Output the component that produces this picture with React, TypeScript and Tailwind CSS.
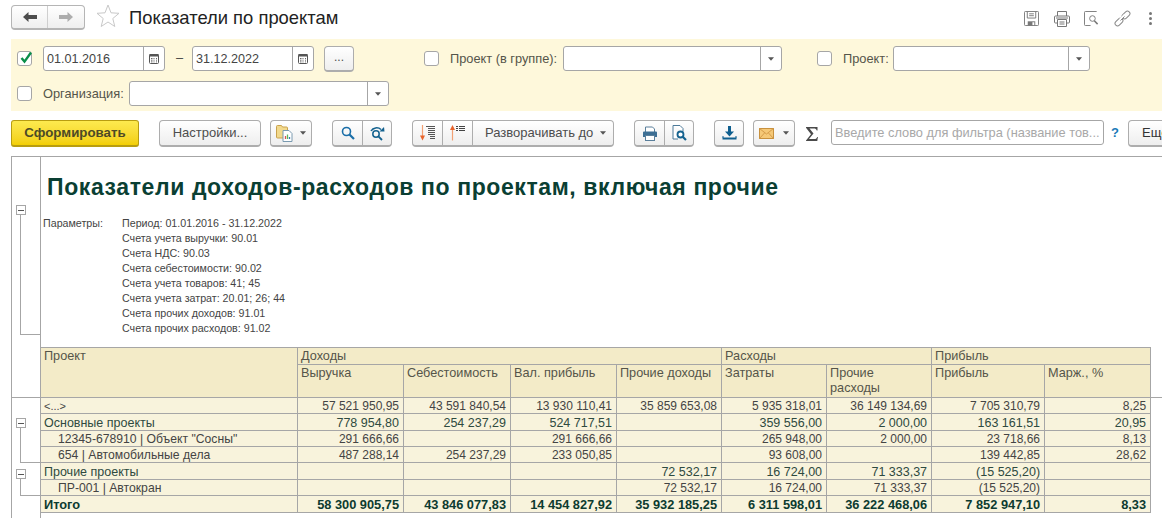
import React from "react";

const btn = "h-[27px] border border-[#adadad] border-b-[2px] rounded-[4px] bg-gradient-to-b from-white to-[#eeeeee] flex items-center justify-center shrink-0 text-[#4d4d4d]";
const Caret = ({ c = "#555" }: { c?: string }) => (
  <svg width="6" height="4" viewBox="0 0 7 4"><path d="M0 0h7L3.5 4z" fill={c} /></svg>
);

const Check = ({ checked, className }: { checked?: boolean; className?: string }) => (
  <div className={"relative w-[15px] h-[15px] shrink-0 bg-white border border-[#a6a6a6] rounded-[3px] " + (className ?? "")}>
    {checked && (
      <svg className="absolute left-[1px] -top-[2px]" width="14" height="15" viewBox="0 0 14 15">
        <path d="M2.5 8l3 3.6L12 2.5" fill="none" stroke="#0a8f4a" strokeWidth="2.4" />
      </svg>
    )}
  </div>
);

const Cal = () => (
  <svg width="10" height="11" viewBox="0 0 10 11">
    <rect x="0.5" y="1.5" width="9" height="9" rx="1" fill="none" stroke="#555" />
    <rect x="0.5" y="1" width="9" height="2.500" fill="#555" />
    <path d="M2 5.500h1.500M4.500 5.500h1M7 5.500h1M2 7.200h1.500M4.500 7.200h1M7 7.200h1M2 8.900h1.500M4.500 8.900h1M7 8.900h1" stroke="#666" strokeWidth="1" />
  </svg>
);

const DateBox = ({ v, w }: { v: string; w: string }) => (
  <div className={"h-[25px] shrink-0 bg-white border border-[#a6a6a6] rounded-[3px] flex items-center " + w}>
    <span className="flex-1 pl-[3px] text-[12.6px] pt-[1px] text-[#444]">{v}</span>
    <div className="w-[21px] h-full border-l border-[#a6a6a6] flex items-center justify-center"><Cal /></div>
  </div>
);

const Combo = ({ w, className }: { w: string; className?: string }) => (
  <div className={"h-[25px] shrink-0 bg-white border border-[#a6a6a6] rounded-[3px] flex items-center justify-end " + w + " " + (className ?? "")}>
    <div className="w-[21px] h-full border-l border-[#a6a6a6] flex items-center justify-center"><Caret /></div>
  </div>
);

const Magnifier = () => (
  <svg width="14" height="14" viewBox="0 0 14 14">
    <circle cx="5.5" cy="5.5" r="4" fill="none" stroke="#1a6ea8" strokeWidth="1.6" />
    <path d="M8.5 8.500l4.500 4.500" stroke="#1a6ea8" strokeWidth="2.200" />
  </svg>
);
const MagnifierNext = () => (
  <svg width="15" height="15" viewBox="0 0 15 15">
    <circle cx="6" cy="8" r="3.200" fill="none" stroke="#14628f" strokeWidth="1.500" />
    <path d="M8.400 10.400l3.600 3.600" stroke="#14628f" strokeWidth="1.800" />
    <path d="M1 5C3 1.500 8 .8 11 3.500" fill="none" stroke="#14628f" strokeWidth="1.500" />
    <path d="M9.500 5.500L14.500 5.500 14 1z" fill="#14628f" />
  </svg>
);
const SortDown = () => (
  <svg width="15" height="16" viewBox="0 0 15 16">
    <path d="M2.500 0v12" stroke="#f2a074" strokeWidth="1.200" />
    <path d="M0 10.500L2.500 15.500l2.500-5z" fill="#e8642c" />
    <path d="M6 1.500h9M8 3.500h7M8 5.500h7M8 7.500h7M8 9.500h7M10 11.500h5M10 13.500h5" stroke="#555" strokeWidth="1" />
  </svg>
);
const SortUp = () => (
  <svg width="15" height="16" viewBox="0 0 15 16">
    <path d="M2.500 3.500v12" stroke="#f2a074" strokeWidth="1.200" />
    <path d="M0 5L2.500 0 5 5z" fill="#e8642c" />
    <path d="M6 1.500h2M6 3.500h2M6 5.500h2M9 1.500h6M9 3.500h6M9 5.500h6" stroke="#444" strokeWidth="1" />
  </svg>
);
const Printer = () => (
  <svg width="16" height="15" viewBox="0 0 16 15">
    <path d="M3.500 6V1h7l2 2v3" fill="#fff" stroke="#5a7f9b" />
    <path d="M1 6.500a1 1 0 0 1 1-1h12a1 1 0 0 1 1 1V11h-2.500V9h-9v2H1z" fill="#3d6f94" />
    <rect x="3.500" y="9.500" width="9" height="5" fill="#fff" stroke="#5a7f9b" />
  </svg>
);
const Preview = () => (
  <svg width="15" height="16" viewBox="0 0 15 16">
    <path d="M1 .5h7l3 3v3M1 .5v13.500h5" fill="#fff" stroke="#4c7a99" />
    <circle cx="8.500" cy="9.500" r="3" fill="#fff" stroke="#14628f" strokeWidth="1.800" />
    <path d="M10.500 11.500l3.500 3.500" stroke="#14628f" strokeWidth="2.200" />
  </svg>
);
const Download = () => (
  <svg width="15" height="14" viewBox="0 0 15 14">
    <path d="M7.500 0v6" stroke="#0f5f8f" strokeWidth="3" />
    <path d="M3 5.500h9L7.500 10.500z" fill="#0f5f8f" />
    <path d="M.5 12.500h14" stroke="#0f5f8f" strokeWidth="2" />
    <path d="M1 10v2M14 10v2" stroke="#0f5f8f" strokeWidth="1" />
  </svg>
);
const Envelope = () => (
  <svg width="15" height="11" viewBox="0 0 15 11">
    <rect x=".5" y=".5" width="14" height="10" fill="#f5c877" stroke="#c8913e" />
    <path d="M.5.5l7 5.500 7-5.500M.5 10.500l5-5.500M14.500 10.500l-5-5.500" fill="none" stroke="#d59c4a" />
  </svg>
);
const FolderDoc = () => (
  <svg width="18" height="17" viewBox="0 0 18 17">
    <path d="M.5 3V1.500a1 1 0 0 1 1-1h4l1 1.500h4a1 1 0 0 1 1 1V13H1.500a1 1 0 0 1-1-1z" fill="#f2d98c" stroke="#c9a24d" />
    <path d="M7 5.500h6l3 3v8H7z" fill="#fff" stroke="#7a9ab0" />
    <path d="M9.500 14v-3" stroke="#d9534f" strokeWidth="1.300" />
    <path d="M11.500 14V9.500" stroke="#5cb85c" strokeWidth="1.300" />
    <path d="M13.500 14v-2" stroke="#337ab7" strokeWidth="1.300" />
  </svg>
);
const Sigma = () => (
  <svg width="12" height="14" viewBox="0 0 12 14">
    <path d="M0 0h11.500v3.500h-.8C10.300 2 9.500 1.500 8 1.500H3.500L7.500 6.500 3 12h5.500c1.500 0 2.200-.6 2.600-2h.8l-.6 4H0v-.6L5 7.300 0 .7z" fill="#4a4a4a" />
  </svg>
);

const TopIcons = () => (
  <div className="ml-auto flex items-center pr-[10px]">
    <svg width="15" height="15" viewBox="0 0 16 16" className="mr-[15px]">
      <path d="M1.500.5h13a1 1 0 0 1 1 1v13a1 1 0 0 1-1 1h-13a1 1 0 0 1-1-1v-13a1 1 0 0 1 1-1z" fill="none" stroke="#777" />
      <path d="M3.500 1v6.500h9V1M5.500 3h5M5.500 5h5" fill="none" stroke="#777" />
      <rect x="4" y="11" width="8" height="4.500" fill="#777" />
      <rect x="9" y="12" width="2" height="3" fill="#fff" />
    </svg>
    <svg width="16" height="16" viewBox="0 0 16 16" className="mr-[14px]">
      <path d="M3.500 5V.5h9V5" fill="none" stroke="#777" />
      <path d="M3 12H1.500a1 1 0 0 1-1-1V6a1 1 0 0 1 1-1h13a1 1 0 0 1 1 1v5a1 1 0 0 1-1 1H13" fill="none" stroke="#777" />
      <path d="M3.500 8.500h9v7h-9zM5.500 11h5M5.500 13h5M2 7h12" fill="none" stroke="#777" />
    </svg>
    <svg width="15" height="15" viewBox="0 0 16 16" className="mr-[15px]">
      <path d="M7 15.500H1.500a1 1 0 0 1-1-1v-13a1 1 0 0 1 1-1h12" fill="none" stroke="#777" />
      <circle cx="9" cy="8" r="3" fill="none" stroke="#777" />
      <path d="M11 10.500l3.500 3.500" stroke="#777" strokeWidth="1.600" />
    </svg>
    <svg width="17" height="17" viewBox="0 0 17 17" className="mr-[18px]">
      <g fill="none" stroke="#888" strokeWidth="1">
        <rect x="-4.500" y="-2.500" width="9" height="5" rx="2.500" transform="translate(5 12) rotate(-45)" />
        <rect x="-4.500" y="-2.500" width="9" height="5" rx="2.500" transform="translate(12 5) rotate(-45)" />
      </g>
      <path d="M6 9.500l5-5" stroke="#fff" strokeWidth="2" />
      <path d="M6.500 10.500l4-4" stroke="#888" strokeWidth="1" />
    </svg>
    <div className="flex flex-col gap-[2px]">
      <div className="w-[3px] h-[3px] rounded-full bg-[#777]" />
      <div className="w-[3px] h-[3px] rounded-full bg-[#777]" />
      <div className="w-[3px] h-[3px] rounded-full bg-[#777]" />
    </div>
  </div>
);

const Outline = ({ h, top }: { h: string; top: string }) => (
  <div className={top}>
    <div className="ml-[4px] w-[10px] h-[10px] border border-[#a6a6a6] bg-white flex items-center justify-center">
      <div className="w-[6px] h-[1px] bg-[#555]" />
    </div>
    <div className={"ml-[8px] w-[20px] border-l border-b border-[#a6a6a6] " + h} />
  </div>
);

type Row = { name: string; vals: string[]; text: string; name2?: string };
const rows: Row[] = [
  { name: "<...>", vals: ["57 521 950,95", "43 591 840,54", "13 930 110,41", "35 859 653,08", "5 935 318,01", "36 149 134,69", "7 705 310,79", "8,25"], text: "h-[16px] text-[12px] text-[#444]", name2: "text-[11px]" },
  { name: "Основные проекты", vals: ["778 954,80", "254 237,29", "524 717,51", "", "359 556,00", "2 000,00", "163 161,51", "20,95"], text: "h-[17px] text-[12.5px] text-[#2e4a40] [&>td]:pt-[2px]" },
  { name: "12345-678910 | Объект \"Сосны\"", vals: ["291 666,66", "", "291 666,66", "", "265 948,00", "2 000,00", "23 718,66", "8,13"], text: "h-[16px] text-[12px] text-[#444]", name2: "pl-[17px] text-[12.2px]" },
  { name: "654 | Автомобильные дела", vals: ["487 288,14", "254 237,29", "233 050,85", "", "93 608,00", "", "139 442,85", "28,62"], text: "h-[16px] text-[12px] text-[#444]", name2: "pl-[17px] text-[12.2px]" },
  { name: "Прочие проекты", vals: ["", "", "", "72 532,17", "16 724,00", "71 333,37", "(15 525,20)", ""], text: "h-[17px] text-[12.5px] text-[#2e4a40] [&>td]:pt-[2px]" },
  { name: "ПР-001 | Автокран", vals: ["", "", "", "72 532,17", "16 724,00", "71 333,37", "(15 525,20)", ""], text: "h-[16px] text-[12px] text-[#444]", name2: "pl-[17px] text-[12.2px]" },
  { name: "Итого", vals: ["58 300 905,75", "43 846 077,83", "14 454 827,92", "35 932 185,25", "6 311 598,01", "36 222 468,06", "7 852 947,10", "8,33"], text: "h-[17px] text-[12.8px] font-bold text-[#0d3b30] [&>td]:pt-[2px]" },
];
const widths = [257, 106, 107, 106, 105, 105, 105, 113, 106];
const params = [
  "Период: 01.01.2016 - 31.12.2022",
  "Счета учета выручки: 90.01",
  "Счета НДС: 90.03",
  "Счета себестоимости: 90.02",
  "Счета учета товаров: 41; 45",
  "Счета учета затрат: 20.01; 26; 44",
  "Счета прочих доходов: 91.01",
  "Счета прочих расходов: 91.02",
];
const bd = "border-r border-b border-[#a6a6a6]";
const hd = "bg-[#f3ebc8] align-top pl-[3px] text-[12.7px] leading-[15px] text-[#55554a] font-normal text-left " + bd;

export default function App() {
  return (
    <div className="w-[1162px] h-[518px] overflow-hidden bg-white flex flex-col font-['Liberation_Sans',Arial,sans-serif]">
      {/* header */}
      <div className="h-[39px] shrink-0 flex items-start pl-[11px] pt-[5px]">
        <div className="h-[25px] w-[74px] border border-[#b5b5b5] border-b-[2px] rounded-[4px] bg-gradient-to-b from-white to-[#efefef] flex">
          <div className="w-[36px] border-r border-[#cfcfcf] flex items-center justify-center">
            <svg width="14" height="10" viewBox="0 0 14 10"><path d="M0 5l5.500-5v3H14v4H5.500v3z" fill="#4d4d4d" /></svg>
          </div>
          <div className="flex-1 flex items-center justify-center">
            <svg width="14" height="10" viewBox="0 0 14 10"><path d="M14 5L8.500 0v3H0v4h8.500v3z" fill="#adadad" /></svg>
          </div>
        </div>
        <svg width="24" height="23" viewBox="0 0 24 23" className="ml-[11px] -mt-[1px]">
          <path d="M12 1l3 7.800 8 .5-6.200 5.200 2 8L12 18l-6.800 4.500 2-8L1 9.300l8-.5z" fill="none" stroke="#c8c8c8" />
        </svg>
        <div className="ml-[9px] text-[18.400px] leading-[26px] text-[#222] whitespace-nowrap">Показатели по проектам</div>
        <div className="ml-auto pt-[5px] flex"><TopIcons /></div>
      </div>

      {/* filter panel */}
      <div className="ml-[11px] h-[72px] shrink-0 bg-[#fef8db] flex flex-col">
        <div className="flex items-center h-[25px] mt-[7px] pl-[6px] text-[12.800px] text-[#55554a]">
          <Check checked />
          <DateBox v="01.01.2016" w="ml-[11px] w-[122px]" />
          <span className="ml-[11px] w-[17px] text-[#444] leading-none">–</span>
          <DateBox v="31.12.2022" w="-ml-[1px] w-[122px]" />
          <div className={btn + " ml-[10px] w-[30px] !h-[26px] text-[12px] pb-[2px]"}>...</div>
          <Check className="ml-[70px]" />
          <span className="ml-[11px] w-[113px] whitespace-nowrap">Проект (в группе):</span>
          <Combo w="w-[219px]" />
          <Check className="ml-[35px]" />
          <span className="ml-[11px] w-[50px]">Проект:</span>
          <Combo w="w-[197px]" />
        </div>
        <div className="flex items-center h-[25px] mt-[10px] pl-[6px] text-[12.800px] text-[#55554a]">
          <Check />
          <span className="ml-[11px] w-[86px]">Организация:</span>
          <Combo w="w-[260px]" />
        </div>
      </div>

      {/* toolbar */}
      <div className="h-[45px] shrink-0 flex items-start pt-[9px] pl-[11px] text-[13px]">
        <div className="h-[27px] w-[128px] shrink-0 border border-[#b89d10] border-b-[2px] rounded-[3px] bg-gradient-to-b from-[#fdea4e] to-[#f3cf00] flex items-center justify-center text-[13.300px] font-bold text-[#4d4a26]">Сформировать</div>
        <div className={btn + " ml-[20px] w-[102px]"}>Настройки...</div>
        <div className={btn + " ml-[9px] w-[42px] gap-[6px]"}><FolderDoc /><Caret /></div>
        <div className={btn + " ml-[20px] w-[60px]"}>
          <div className="w-[30px] h-full flex items-center justify-center border-r border-[#adadad]"><Magnifier /></div>
          <div className="flex-1 h-full flex items-center justify-center"><MagnifierNext /></div>
        </div>
        <div className={btn + " ml-[20px] w-[202px]"}>
          <div className="w-[30px] h-full flex items-center justify-center border-r border-[#adadad]"><SortDown /></div>
          <div className="w-[30px] h-full flex items-center justify-center border-r border-[#adadad]"><SortUp /></div>
          <div className="flex-1 h-full flex items-center pl-[12px] gap-[7px]">Разворачивать до <Caret /></div>
        </div>
        <div className={btn + " ml-[20px] w-[60px]"}>
          <div className="w-[30px] h-full flex items-center justify-center border-r border-[#adadad]"><Printer /></div>
          <div className="flex-1 h-full flex items-center justify-center"><Preview /></div>
        </div>
        <div className={btn + " ml-[20px] w-[30px]"}><Download /></div>
        <div className={btn + " ml-[9px] w-[42px] gap-[9px]"}><Envelope /><Caret /></div>
        <div className="ml-[11px] w-[14px] h-[27px] shrink-0 flex items-center"><Sigma /></div>
        <div className="ml-[11px] w-[273px] h-[25px] shrink-0 bg-white border border-[#a6a6a6] rounded-[3px] flex items-center pl-[3px] text-[12.800px] text-[#a8a8a8] whitespace-nowrap overflow-hidden">Введите слово для фильтра (название тов...</div>
        <div className="ml-[7px] w-[10px] shrink-0 h-[25px] flex items-center text-[13px] font-bold text-[#1a7ab8]">?</div>
        <div className={btn + " ml-[7px] w-[60px] !justify-start pl-[13px] text-[13px] text-[#333]"}>Ещё</div>
      </div>

      {/* report */}
      <div className="ml-[11px] flex-1 min-h-0 flex border-t border-[#a6a6a6]">
        <div className="w-[30px] shrink-0 border-l border-r border-[#a6a6a6] flex flex-col">
          <div className="h-[241px] shrink-0 border-b border-[#a6a6a6]">
            <Outline top="pt-[48px]" h="h-[120px]" />
          </div>
          <Outline top="pt-[20px]" h="h-[35px]" />
          <Outline top="pt-[6px]" h="h-[17px]" />
        </div>
        <div className="flex-1 min-w-0 flex flex-col">
          <div className="h-[46px] mt-[15px] pl-[6px] text-[23px] leading-[30px] font-bold tracking-[0.6px] text-[#0a3f33] whitespace-nowrap">Показатели доходов-расходов по проектам, включая прочие</div>
          <div className="mt-[-2px] h-[131px] flex pl-[2px] text-[10.700px] leading-[15px] text-[#444]">
            <div className="w-[79px]">Параметры:</div>
            <div>{params.map((p) => <div key={p}>{p}</div>)}</div>
          </div>
          <div className="flex items-start">
            <table className="table-fixed border-separate border-spacing-0 w-[1110px] shrink-0">
              <colgroup>{widths.map((w, i) => <col key={i} style={{ width: w }} />)}</colgroup>
              <thead>
                <tr className="h-[18px]">
                  <th rowSpan={2} className={hd + " border-t pt-[1px]"}>Проект</th>
                  <th colSpan={4} className={hd + " border-t pt-[1px]"}>Доходы</th>
                  <th colSpan={2} className={hd + " border-t pt-[1px]"}>Расходы</th>
                  <th colSpan={2} className={hd + " border-t pt-[1px]"}>Прибыль</th>
                </tr>
                <tr className="h-[33px]">
                  {["Выручка", "Себестоимость", "Вал. прибыль", "Прочие доходы", "Затраты"].map((t) => <th key={t} className={hd + " pt-[1px]"}>{t}</th>)}
                  <th className={hd + " pt-[1px]"}>Прочие<br />расходы</th>
                  <th className={hd + " pt-[1px]"}>Прибыль</th>
                  <th className={hd + " pt-[1px]"}>Марж., %</th>
                </tr>
              </thead>
              <tbody>
                {rows.map((r) => (
                  <tr key={r.name} className={r.text}>
                    <td className={"p-0 pl-[3px] leading-[14px] bg-[#f8f3dc] whitespace-nowrap overflow-hidden " + bd + " " + (r.name2 ?? "")}>{r.name}</td>
                    {r.vals.map((v, i) => (
                      <td key={i} className={"p-0 pr-[4px] text-right leading-[14px] bg-[#f8f3dc] whitespace-nowrap overflow-hidden " + bd}>{v}</td>
                    ))}
                  </tr>
                ))}
              </tbody>
            </table>
            <div className="flex-1 h-[51px] border-b border-[#a6a6a6]" />
          </div>
        </div>
      </div>
    </div>
  );
}
